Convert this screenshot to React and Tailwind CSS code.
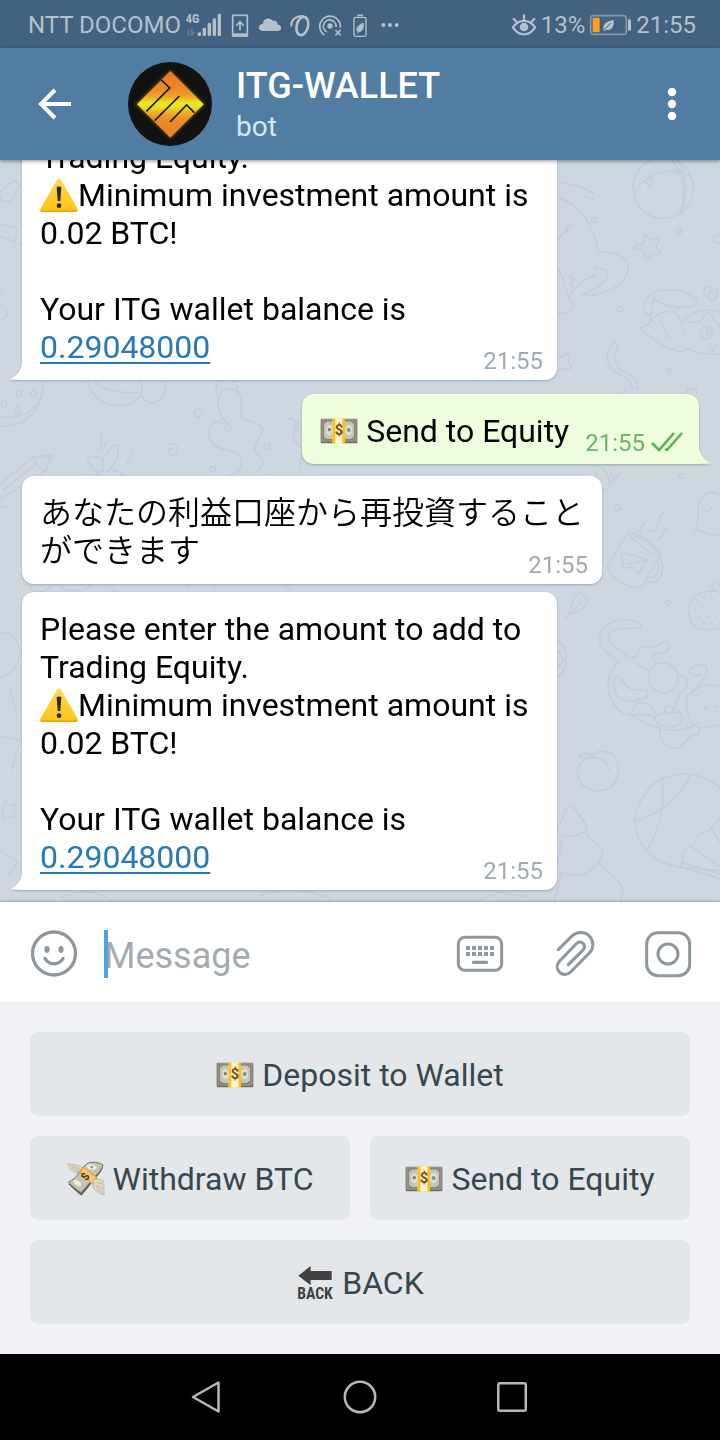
import React from "react";

/* ---------- emoji drawings ---------- */

function Banknote() {
  return (
    <svg viewBox="531 68 114 78" className="h-[26px] w-[38px] shrink-0" aria-hidden="true">
      <rect x="533" y="70" width="110" height="74" rx="3" fill="#6f6b5f" />
      <rect x="535" y="71" width="106" height="68" rx="2" fill="#97948a" />
      <rect x="541" y="77" width="94" height="56" fill="#c6c4b6" stroke="#7f7c70" strokeWidth="3" />
      <ellipse cx="559" cy="104" rx="10" ry="16" fill="#e0ded2" />
      <ellipse cx="617" cy="104" rx="11" ry="16" fill="#e0ded2" />
      <circle cx="559" cy="103" r="5" fill="#7d7b70" />
      <circle cx="617" cy="104" r="6" fill="#6fa086" />
      <path d="M543 84l8-6M543 126l8 6M633 84l-8-6M633 126l-8 6" stroke="#6f6b5f" strokeWidth="3" />
      <rect x="569" y="69" width="37" height="76" fill="#fff6cf" />
      <rect x="569" y="69" width="8" height="76" fill="#fcc21b" />
      <rect x="598" y="69" width="8" height="76" fill="#fcc21b" />
      <text x="588" y="119" textAnchor="middle" fontSize="44" fontWeight="700" fill="#7a4a1f" fontFamily="Roboto, sans-serif">$</text>
    </svg>
  );
}

function FlyingMoney() {
  return (
    <svg viewBox="80 365 114 108" className="h-9 w-[38px] shrink-0" aria-hidden="true">
      <path d="M82 374c14 1 26 3 36 6l16 8-8 16c-8 4-16 0-20-5-8 0-12-4-13-9-6-2-9-6-8-9-3-2-4-5-3-7z" fill="#e0d7c2" stroke="#b5aa92" strokeWidth="2" />
      <path d="M90 380l28 8M96 389l22 5M106 398l14 0" stroke="#b5aa92" strokeWidth="2" />
      <path d="M84 434c14-8 24-16 32-28 10-16 20-32 36-36 12-3 30 2 37 8-2 18-18 32-30 46-10 14-22 28-36 45-12-10-24-20-39-35z" fill="#5f5c54" />
      <path d="M84 429c14-8 24-16 32-28 10-16 20-30 36-32 12-2 30 2 36 8-4 16-18 28-30 40-10 14-22 28-36 43-12-8-24-17-38-31z" fill="#c4c2b5" stroke="#7d7b70" strokeWidth="3" />
      <ellipse cx="154" cy="383" rx="15" ry="8" fill="#eceadf" transform="rotate(12 154 383)" />
      <circle cx="154" cy="383" r="4" fill="#77a58c" />
      <ellipse cx="111" cy="431" rx="13" ry="7" fill="#eceadf" transform="rotate(35 111 431)" />
      <path d="M117 398l14-16 42 34-15 20c-12-6-28-20-41-38z" fill="#f9a825" />
      <path d="M121 398l11-11 34 30-10 14c-12-7-24-20-35-33z" fill="#f3c877" />
      <text x="134" y="423" textAnchor="middle" fontSize="33" fontWeight="700" fill="#5a3412" fontFamily="Roboto, sans-serif" transform="rotate(-55 134 411)">$</text>
      <path d="M160 421c10-3 20-2 28 2 4 5 2 8 0 10 5 5 4 9 1 12 3 6 3 16 2 21-8 0-16-4-20-10-6-2-12-8-14-14z" fill="#e0d7c2" stroke="#b5aa92" strokeWidth="2" />
      <path d="M166 430l20 3M166 439l20 8M172 449l16 12" stroke="#b5aa92" strokeWidth="2" />
    </svg>
  );
}

function BackArrowEmoji() {
  return (
    <svg viewBox="768 678 114 108" className="h-9 w-[38px] shrink-0 overflow-visible" aria-hidden="true">
      <path d="M775 710l37-29v15h63v27h-63v16z" fill="#424242" />
      <text x="825" y="781" textAnchor="middle" fontSize="47" fontWeight="700" fill="#424242" fontFamily="'Roboto Condensed', 'Liberation Sans Narrow', Roboto, sans-serif">BACK</text>
    </svg>
  );
}

function Warning() {
  return (
    <svg viewBox="120 51 114 102" className="inline-block h-[34px] w-[38px] align-[-6px]" role="img" aria-label="Warning">
      <defs>
        <linearGradient id="warn" x1="0" y1="0" x2="0" y2="1">
          <stop offset="0" stopColor="#fdd94a" />
          <stop offset="1" stopColor="#fcc419" />
        </linearGradient>
      </defs>
      <path d="M171 56q6-6 12 0l50 88q3 8-5 9h-102q-8-1-5-9z" fill="url(#warn)" />
      <path d="M121 148q1 4 5 5h102q4-1 5-5z" fill="#f2a600" />
      <path d="M170 78q7-3 14 0l-3 42h-8z" fill="#2b2b2b" />
      <circle cx="177" cy="134" r="7" fill="#2b2b2b" />
    </svg>
  );
}

/* ---------- status bar ---------- */

function StatusBar() {
  return (
    <div className="flex h-12 shrink-0 items-center justify-between bg-[#43627f] pt-0.5 pr-6 pl-7 text-2xl text-[#b4c0cc]">
      <div className="flex items-center gap-2">
        <div className="flex items-center gap-1">
          <span className="whitespace-nowrap">NTT DOCOMO</span>
          <svg viewBox="558 30 111 84" className="h-7 w-[37px]" fill="currentColor" aria-label="4G signal">
            <text x="560" y="67" fontSize="37" fontWeight="700" fontFamily="'Roboto Condensed', 'Liberation Sans Narrow', Roboto, sans-serif">4G</text>
            <rect x="596" y="94" width="10" height="11" rx="4" />
            <rect x="611" y="80" width="10" height="25" rx="4" />
            <rect x="626" y="66" width="10" height="39" rx="4" />
            <rect x="641" y="52" width="10" height="53" rx="4" />
            <rect x="656" y="38" width="10" height="67" rx="4" />
            <path d="M562 95l9-12v22h-5v-10zM576 83h5v10h9l-10 12h-4z" opacity=".3" />
          </svg>
        </div>
        <svg viewBox="693 30 57 84" className="h-7 w-[19px]" fill="none" stroke="currentColor" strokeWidth="5" aria-hidden="true">
          <rect x="701" y="43" width="44" height="62" />
          <path d="M699 102h48" strokeWidth="10" />
          <path d="M723 88V63M712 74l11-12 11 12" />
        </svg>
        <svg viewBox="774 30 75 84" className="h-7 w-[25px]" fill="currentColor" aria-hidden="true">
          <path d="M790 90c-15-1-13-21 1-22 2-16 22-20 29-9 10-2 17 5 16 12 15 1 13 19 0 19z" />
        </svg>
        <svg viewBox="873 30 63 84" className="h-7 w-[21px]" fill="none" stroke="currentColor" strokeLinecap="round" aria-hidden="true">
          <ellipse cx="910" cy="75" rx="17" ry="28" strokeWidth="8" transform="rotate(14 910 75)" />
          <path d="M877 74c-1-16 12-29 34-29" strokeWidth="6" />
        </svg>
        <svg viewBox="960 30 72 84" className="h-7 w-6" fill="none" stroke="currentColor" strokeWidth="5" aria-hidden="true">
          <circle cx="993" cy="75" r="8" fill="currentColor" stroke="none" />
          <path d="M976 102a31 31 0 1 1 48-22" />
          <path d="M984 93a19 19 0 1 1 27-15" />
          <path d="M1009 87l16 16M1025 87l-16 16" />
        </svg>
        <svg viewBox="1056 30 54 84" className="h-7 w-[18px]" fill="none" stroke="currentColor" strokeWidth="4" aria-hidden="true">
          <rect x="1065" y="49" width="36" height="57" rx="5" />
          <path d="M1075 43h17" strokeWidth="5" />
          <path d="M1093 66c2 18-4 27-15 26-10-2-4-20 15-26zM1074 99l8-11" fill="currentColor" strokeWidth="2" />
        </svg>
        <svg viewBox="1134 30 72 84" className="h-7 w-6" fill="currentColor" aria-hidden="true">
          <circle cx="1153" cy="72" r="6" />
          <circle cx="1173" cy="72" r="6" />
          <circle cx="1193" cy="72" r="6" />
        </svg>
      </div>
      <div className="flex items-center gap-1">
        <svg viewBox="33 30 78 84" className="h-7 w-[26px]" fill="none" stroke="currentColor" strokeWidth="7" strokeLinecap="round" aria-hidden="true">
          <path d="M39 79c18-26 48-26 66 0-18 28-48 28-66 0z" />
          <circle cx="72" cy="78" r="13" fill="currentColor" stroke="none" />
          <path d="M72 58V43M50 63l-9-9M94 63l9-9" />
        </svg>
        <span>13%</span>
        <svg viewBox="267 30 129 84" className="h-7 w-[43px]" fill="none" aria-label="Battery">
          <rect x="272" y="44" width="107" height="56" rx="8" stroke="#8197ab" strokeWidth="5" />
          <rect x="278" y="50" width="21" height="44" rx="3" fill="#ff9d1c" />
          <rect x="384" y="55" width="9" height="34" rx="3" fill="currentColor" />
          <path d="M341 57c2 22-8 32-22 30l-8 3c-5-20 8-30 30-33z" fill="currentColor" />
          <path d="M312 88l20-22" stroke="#43627f" strokeWidth="3" />
        </svg>
        <span>21:55</span>
      </div>
    </div>
  );
}

/* ---------- header ---------- */

function Avatar() {
  return (
    <svg viewBox="384 42 252 252" className="ml-12 size-[84px] shrink-0" role="img" aria-label="ITG-WALLET">
      <defs>
        <linearGradient id="gold" x1="0" y1="68" x2="0" y2="270" gradientUnits="userSpaceOnUse">
          <stop offset="0" stopColor="#e8742a" />
          <stop offset=".3" stopColor="#ee8c27" />
          <stop offset=".4" stopColor="#ecae24" />
          <stop offset=".47" stopColor="#e9e61c" />
          <stop offset=".53" stopColor="#e9e61c" />
          <stop offset=".63" stopColor="#ecae24" />
          <stop offset=".72" stopColor="#ee8c27" />
          <stop offset="1" stopColor="#e8802a" />
        </linearGradient>
        <filter id="glow" x="-20%" y="-20%" width="140%" height="140%">
          <feGaussianBlur stdDeviation="4" />
        </filter>
      </defs>
      <circle cx="510" cy="168" r="126" fill="#121212" />
      <path d="M511 67L615 169 511 271 407 169z" fill="#a5801c" filter="url(#glow)" opacity=".6" />
      <path d="M511 69L611 169 511 269 411 169z" fill="url(#gold)" />
      <path d="M484 96l25 24-70 70M538 144l-74 74M510 222l50-51 23 23" fill="none" stroke="#1a1608" strokeWidth="5" />
    </svg>
  );
}

function Header() {
  return (
    <header className="relative z-10 flex h-28 shrink-0 items-center bg-[#517da2] pr-6 pl-8 shadow-[0_1px_4px_rgba(0,0,0,0.45)]">
      <button type="button" aria-label="Back" className="size-12 shrink-0">
        <svg viewBox="0 0 48 48" className="size-12" fill="none" stroke="#fff" strokeWidth="4">
          <path d="M39 24H10M23 10L9 24l14 14" />
        </svg>
      </button>
      <Avatar />
      <div className="ml-6 min-w-0 flex-1 pt-0.5">
        <h1 className="text-4xl leading-11 font-medium text-white">ITG-WALLET</h1>
        <p className="text-[28px] leading-[38px] text-[#d3e6f7]">bot</p>
      </div>
      <button type="button" aria-label="More options" className="size-12 shrink-0">
        <svg viewBox="0 0 48 48" className="size-12" fill="#fff">
          <circle cx="24" cy="12" r="4.2" />
          <circle cx="24" cy="24" r="4.2" />
          <circle cx="24" cy="36" r="4.2" />
        </svg>
      </button>
    </header>
  );
}

/* ---------- chat ---------- */

function Wallpaper() {
  return (
    <svg
      viewBox="0 160 720 742"
      preserveAspectRatio="xMidYMid slice"
      className="absolute inset-0 size-full"
      fill="none"
      stroke="#c4ccde"
      strokeWidth="5"
      strokeLinecap="round"
      strokeLinejoin="round"
      aria-hidden="true"
    >
      <g transform="translate(550 160) scale(0.3333)">
        <circle cx="340" cy="84" r="91" />
        <path d="M253 105c20-50 70-75 124-71 20 1 38 8 48 20M365 0c34 40 50 100 22 164M385 5c24 40 30 100 8 155M285 52l22 14M300 40l6 20M288 68l14 12" />
        <circle cx="382" cy="33" r="8" />
        <circle cx="132" cy="180" r="8" />
        <circle cx="387" cy="214" r="8" />
        <circle cx="211" cy="447" r="8" />
        <circle cx="357" cy="632" r="6" />
        <path d="M37 69c35 0 65 14 94 33M99 106l33 12M22 112c70 20 112 90 123 165 50-4 92 16 89 50-4 50-76 84-138 78 30-12 62-32 74-50 10-22-4-32-34-28l-1-20M138 347c-20 4-50 20-68 42M22 238l42-44M52 214v-16M22 330c24 20 20 54 36 84 20 30 12 50-36 46M52 350c20-10 20 20 10 26 14 0 8 30-6 26" />
        <path d="M281 222c12-2 14 16 20 18l26-6c4 8-8 16-10 24l14 20c-6 12-20 2-26 6l-14 16c-10-4-4-18-10-26l-28-10c-2-10 22-10 28-14z" />
        <path d="M510 222c-14 2-26 10-25 16 2 8 14 12 25 12" />
        <ellipse cx="375" cy="415" rx="66" ry="24" transform="rotate(9 375 415)" />
        <path d="M306 402c-34 20-30 70 0 62M312 412l-12 68M440 436c-40 14-90 10-128-18M268 506l28-12c12-24 36-40 70-40 16 0 34 40 36 68M268 506c30 14 60 60 134 70l4-12c50 24 80 16 104 18M328 480c20 10 14 46 34 54M396 488l32-28c30-10 60-14 82-4M420 486h30l22-32 38 46M452 510c14-18 40-4 34 14-14 26-44 10-34-14zM470 506l6 20M478 560l20 26M498 560l-20 24" />
        <path d="M480 382c30-4 30 40 6 38-20-4-12-28 4-22M463 405c-6-16 10-30 24-22M498 400c4 10-2 22-14 22" />
        <path d="M190 545l16 10c-20 40-10 68 22 82 26 12 38 28 34 50l-16-2c0-20-12-28-34-40-44-20-54-60-22-100zM22 594l12-4 8-8 18 2-4 22 8 18-14 4-16-2-12 6M220 700l4-12M410 700l2-14h26l2 14" />
      </g>
      <g transform="translate(550 460) scale(0.3333)">
        <circle cx="394" cy="48" r="7" />
        <circle cx="202" cy="142" r="9" />
        <circle cx="354" cy="429" r="7" />
        <path d="M135 32l14 42 16 22 44-56M150 20c20 10 30 30 26 52M180 30l10 30M234 218c30 0 84 30 98 66l-58 100c-50-2-90-30-103-64zM236 222c30 30 60 60 94 64M250 226c30 10 60 30 74 54M330 290c20 50-4 86-42 76M322 300c10 34-6 56-26 52M214 276l80 24-30 42-14-20-30 2zM294 300l-62 12M265 212c20 4 0-20 20-22M296 214c40 10 20-60 50-56M320 240c24-4 14-34 34-34" />
        <path d="M510 104c-40-20-70 10-66 60l-2 46-12 4c16-6 20-2 30 4 20 6 30 6 50 8M456 144c6 14 26 12 28-2M48 472c16-4 14-46 26-66 6-4 20-6 22-16M96 406c16 0 20 16 12 28-10 16-30 26-50 30M92 426l-30 38" />
        <path d="M510 396c-60-14-100 20-92 70 6 46 40 48 92 38M490 392c-10-30 4-40 20-12M440 420l4 6M460 410l4 6M484 412l4 6M434 446l4 6M456 440l4 6M480 440l4 6M500 440l4 6M446 468l4 6M470 466l4 6M494 466l4 6M460 488l4 6M484 488l4 6" />
        <path d="M266 504c20-10 0-24-40-24-60 0-88 40-74 74 10 30 50 40 54 50-20 20-40 60-28 100 10 40 40 60 70 64 60 40 140 60 200 20M266 504c-30 6-80-10-90 24-4 36 50 40 56 66 40-4 30-12 38-32 20-6 50 10 64-14 20-8 34 14 18 24-12 14-40 4-46 18l12 20M192 660c6-20 20-8 30 8 20 40 80 4 70 40-6 12-28 10-28 8M192 660c-4 50 20 70 70 60-6 20-10 30-24 44 50 0 80 0 76 14M262 730c14-4 40-4 52 30M264 614l30 16" />
        <circle cx="340" cy="654" r="45" />
        <path d="M380 650c40-10 36 20 24 40-30 20-24 50-34 60M420 640c-10-20 50-40 52-10 0 20-40 60-60 76-10 50 10 90 40 100l60-12M420 640c10 8 24 8 34 4M510 678c-30-6-76-4-86 30M316 770c20-20 60-4 70-18 20 20 10 50-30 48-30-2-44-14-40-30M342 748c0-16 30-12 28 4-4 12-26 10-28-4zM330 806c-4 40 20 60 50 58 30-10 30-40 64-40l4-20M432 710l14-10M464 742l8 4M492 738l8 4" />
        <path d="M124 890c10-20 50-24 70 0 20 26 14 70-14 94-24 14-60 10-80-6-30-30-20-80 24-84 30-4 50 16 54 36M124 890c-14-14-30-10-38-4 10 12 24 10 38 4zM124 890l-4-12" />
        <path d="M510 984c-60-60-170-54-220 10-60 80-40 160 40 210 40 20 120 24 180 54M336 948c10 90-10 170-50 230M420 950c-30 60-100 120-172 136M510 1074l-22 28c-20 30-56 6-50 46-20 10-40 20-36 34l-10 40 118 10M424 1160l86 60M484 1106l26 40M390 1206l120 36" />
        <path d="M22 1110l24-58c6-20 20-16 30-4 10 20 30 34 34 54-4 20-20 16-30 24-20 6-32 4-50-2M38 1134l-14 70M108 1116c10 30 50 34 50 66-10 30-40 56-66 64-20 4-40-6-64-12M148 1212c30 30 70 50 70 84l-6 30M36 1236l-24 90" />
        <path d="M22 542c36 20 36 90 0 110M22 570l26 40M22 620l24-24" />
      </g>
      <g transform="translate(0 370) scale(0.3333)">
        <path d="M128 34c10 60-40 120-128 106M128 66c-10 60-60 110-128 102" />
        <ellipse cx="56" cy="72" rx="8" ry="9" />
        <ellipse cx="100" cy="71" rx="9" ry="8" />
        <ellipse cx="12" cy="103" rx="8" ry="11" />
        <ellipse cx="52" cy="121" rx="7" ry="11" />
        <path d="M262 34c14 50 50 74 104 72 50-4 70-36 56-72M286 34c10 20 60 36 130 34M426 80c20 30 74 26 70-46" />
        <circle cx="596" cy="129" r="12" />
        <circle cx="802" cy="230" r="9" />
        <circle cx="638" cy="298" r="8" />
        <path d="M690 316c40-10 50-60 6-72-20-6-50-8-62-28-20-30 0-64 26-60 16 4 14 24 28 30 14-10-10-30-26-50-20-50-4-80 28-80 50 4 30 60 32 78 10 30 60 14 66 46-4 30-30 40-24 60 10 20 26 22 28 34-4 20-18 18-20 34" />
        <path d="M502 224c20-10 36 6 30 22-6 14-30 10-28-6 2-8 14-8 14 0M300 188c10 20 0 50-6 56M318 216l-12 30M400 238c-6 20-14 34-20 42M262 264c20-10 44 0 46 6 0 20 0 40-14 36-20-10-26-26-32-42zM310 266c10-20 30-50 44-36 6 30-14 60-34 76M286 316l24-14M334 296l40 20" />
        <path d="M0 342l100-82 56-4-20 48-16 12M0 412l24-4M100 260c4 20 20 40 36 44M10 360l94-74M0 386l118-70" />
        <path d="M140 258l16-2-6 16z" fill="#c4ccde" />
        <path d="M864 148c10-10 20 0 24 12l-8 40c0 20 20 20 28 40l-10 60M880 150l14 4v30" />
        <path d="M90 650c10 20 40 20 60 0M180 650c30 20 80 14 96-10M560 650l12-10M640 660l10-20M850 640l20 20M320 650l30 14" />
      </g>
      <g transform="translate(0 160) scale(0.3333)">
        <path d="M0 96l36-30c10-10 30 10 20 20l-20 34c-20 10-30 4-36-10M0 200c20-20 30 0 30 4 20-20 34 20 10 40l24 10M0 230l40 14M0 436a22 22 0 0 1 0 44M0 380l10 10-10 14M650 700a32 32 0 1 1 60 0" />
      </g>
      <path d="M0 632c10 0 20 8 20 22-2 14-10 20-20 24M10 690l8 30M0 736l20 4-8 30M4 800l5 5 7-1-3 7 4 7-8-2-6 4v-8zM0 850l18 12-10 14M60 898c20-10 40-6 50 2M260 896c20-8 50-8 70 4M480 900l20-8 30 6" strokeWidth="1.500" />
    </svg>
  );
}

function Tail({ side }) {
  return side === "left" ? (
    <svg viewBox="0 0 14 24" className="absolute bottom-0 -left-3 h-6 w-3.5" aria-hidden="true">
      <path d="M12 0v5C12 14 7 20 0 23.500L14 24V0z" fill="#fff" />
    </svg>
  ) : (
    <svg viewBox="0 0 14 24" className="absolute -right-3 bottom-0 h-6 w-3.5" aria-hidden="true">
      <path d="M2 0v5C2 14 7 20 14 23.500L0 24V0z" fill="#efffde" />
    </svg>
  );
}

function Incoming({ children, tail, className }) {
  return (
    <article
      className={
        "relative w-fit shrink-0 bg-white px-[18px] pt-[18px] pb-3.5 text-[32px] leading-[38px] text-black drop-shadow-[0_1px_1px_rgba(110,140,170,0.6)] " +
        (tail ? "rounded-[12px] rounded-bl-none " : "rounded-[12px] ") +
        className
      }
    >
      {children}
      <time className="absolute right-3.5 bottom-[7px] text-2xl leading-6 text-[#a1aab3]">21:55</time>
      {tail && <Tail side="left" />}
    </article>
  );
}

function BalanceMessage({ intro }) {
  return (
    <Incoming tail className="max-w-[535px]">
      <p className="pr-2">
        {intro}
        <br />
        <Warning />
        Minimum investment amount is 0.02 BTC!
      </p>
      <p className="pt-[38px]">
        Your ITG wallet balance is
        <br />
        <a href="#balance" className="text-[#2678b6] underline decoration-2 underline-offset-4">
          0.29048000
        </a>
      </p>
    </Incoming>
  );
}

function Chat() {
  return (
    <main className="relative flex min-h-0 flex-1 flex-col overflow-hidden bg-[#ced6e0]">
      <Wallpaper />
      <div className="relative flex min-h-0 flex-1 flex-col justify-end pr-[21px] pb-3 pl-[22px]">
        <BalanceMessage intro="Trading Equity." />
        <article className="relative mt-3.5 mb-3 flex w-fit shrink-0 self-end rounded-[12px] rounded-br-none bg-[#efffde] pr-4 pl-[18px] drop-shadow-[0_1px_1px_rgba(110,160,130,0.7)]">
          <p className="flex items-center gap-2 pt-[18px] pb-3.5 text-[32px] leading-[38px] text-black">
            <Banknote />
            Send to Equity
          </p>
          <div className="ml-4 flex items-center gap-1.5 self-end pb-[9px] text-2xl leading-6 text-[#6fb26a]">
            <time>21:55</time>
            <svg viewBox="0 0 32 24" className="h-6 w-8" fill="none" stroke="#5fb05a" strokeWidth="2.600" aria-label="Read">
              <path d="M1 12l7 7L23 2M14 18l2 1L31 2" />
            </svg>
          </div>
          <Tail side="right" />
        </article>
        <Incoming className="max-w-[580px]">
          <p lang="ja" className="font-[350]">あなたの利益口座から再投資することができます</p>
        </Incoming>
        <div className="h-2 shrink-0" />
        <BalanceMessage intro="Please enter the amount to add to Trading Equity." />
      </div>
    </main>
  );
}

/* ---------- composer ---------- */

function Composer() {
  const dots = [0, 1, 2, 3, 4];
  return (
    <form
      className="relative flex h-[100px] shrink-0 items-center bg-white pt-1 pr-7 pl-[30px] shadow-[0_-1px_2px_rgba(100,120,140,0.5)]"
      onSubmit={(e) => e.preventDefault()}
    >
      <button type="button" aria-label="Emoji" className="size-12 shrink-0">
        <svg viewBox="0 0 48 48" className="size-12" fill="none" stroke="#8e979e" strokeWidth="3.300" strokeLinecap="round">
          <circle cx="24" cy="23.500" r="21.500" />
          <path d="M15 28.500c4 7 14 7 18 0" />
          <ellipse cx="17" cy="19.500" rx="2.600" ry="3.400" fill="#8e979e" stroke="none" />
          <ellipse cx="31" cy="19.500" rx="2.600" ry="3.400" fill="#8e979e" stroke="none" />
        </svg>
      </button>
      <div className="relative ml-[26px] flex min-w-0 flex-1 items-center">
        <input
          type="text"
          aria-label="Message"
          placeholder="Message"
          className="h-12 w-full bg-transparent pt-1 text-4xl text-black outline-none placeholder:text-[#a5abb2]"
        />
        <span className="absolute left-0 h-12 w-1 bg-[#52a1dd]" />
      </div>
      <div className="ml-6 flex shrink-0 gap-[46px]">
        <button type="button" aria-label="Bot keyboard" className="size-12">
          <svg viewBox="108 90 144 144" className="size-12" aria-hidden="true">
            <rect x="115" y="112" width="130" height="99" rx="20" fill="none" stroke="#8e979e" strokeWidth="9" />
            {dots.map((i) => (
              <g key={i} fill="#8e979e">
                <rect x={138 + i * 18} y="138" width="12" height="12" />
                <rect x={138 + i * 18} y="156" width="12" height="12" />
              </g>
            ))}
            <rect x="156" y="182" width="48" height="10" rx="3" fill="#8e979e" />
          </svg>
        </button>
        <button type="button" aria-label="Attach" className="size-12">
          <svg viewBox="393 90 144 144" className="size-12" fill="none" stroke="#8e979e" strokeWidth="9" strokeLinecap="round" aria-hidden="true">
            <path d="M418 149l42-42c16-14 38-12 51 1 14 14 14 36 0 51l-56 57c-11 11-25 9-33 1-10-10-10-24 1-35l48-50c7-7 15-7 21-2 6 6 6 14-1 21l-43 43" />
          </svg>
        </button>
        <button type="button" aria-label="Record video" className="size-12">
          <svg viewBox="672 90 144 144" className="size-12" fill="none" stroke="#8e979e" strokeWidth="9" aria-hidden="true">
            <rect x="680" y="98" width="129" height="129" rx="34" />
            <circle cx="744" cy="162" r="30" />
          </svg>
        </button>
      </div>
    </form>
  );
}

/* ---------- bot keyboard ---------- */

function Key({ icon, label, wide }) {
  return (
    <button
      type="button"
      className={
        "flex h-21 items-center justify-center gap-2 rounded-lg bg-[#e3e7ea] pt-0.5 text-[32px] leading-[38px] whitespace-nowrap text-[#37474f] " +
        (wide ? "col-span-2" : "")
      }
    >
      {icon}
      <span>{label}</span>
    </button>
  );
}

function BotKeyboard() {
  return (
    <section aria-label="Bot keyboard" className="relative grid shrink-0 grid-cols-2 gap-5 bg-[#f0f2f6] p-[30px]">
      <Key wide icon={<Banknote />} label="Deposit to Wallet" />
      <Key icon={<FlyingMoney />} label="Withdraw BTC" />
      <Key icon={<Banknote />} label="Send to Equity" />
      <Key wide icon={<BackArrowEmoji />} label="BACK" />
    </section>
  );
}

function NavBar() {
  return (
    <nav className="flex h-[86px] shrink-0 items-center justify-center gap-28 bg-black">
      <button type="button" aria-label="Back" className="size-10">
        <svg viewBox="0 0 40 40" className="size-10" fill="none" stroke="#b8b8b8" strokeWidth="2.500" strokeLinejoin="round">
          <path d="M30.500 5.500v29L5 20z" />
        </svg>
      </button>
      <button type="button" aria-label="Home" className="size-10">
        <svg viewBox="0 0 40 40" className="size-10" fill="none" stroke="#b8b8b8" strokeWidth="2.500">
          <circle cx="20" cy="20" r="15.200" />
        </svg>
      </button>
      <button type="button" aria-label="Recent apps" className="size-10">
        <svg viewBox="0 0 40 40" className="size-10" fill="none" stroke="#b8b8b8" strokeWidth="2.500">
          <rect x="6.300" y="6.300" width="27.500" height="27.500" rx="1.500" />
        </svg>
      </button>
    </nav>
  );
}

export default function App() {
  return (
    <div className="flex h-screen flex-col overflow-hidden font-[Roboto,'Noto_Sans_CJK_JP',sans-serif]">
      <StatusBar />
      <Header />
      <Chat />
      <Composer />
      <BotKeyboard />
      <NavBar />
    </div>
  );
}
